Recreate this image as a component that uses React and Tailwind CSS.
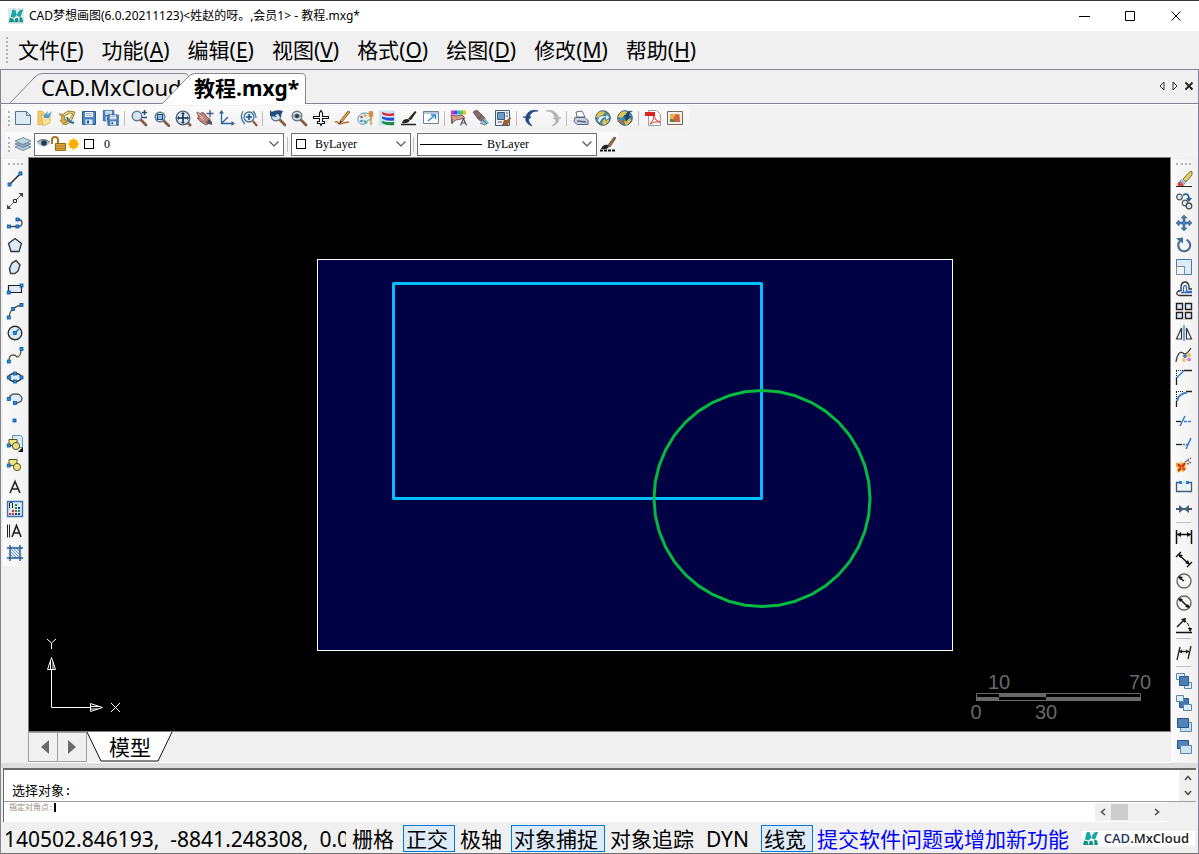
import { useState } from "react";

const Grip = ({ x, y }) => (
    <rect x={x - 1.500} y={y - 1.500} width="3" height="3" fill="#1c96f5" stroke="#0b4f96" strokeWidth=".800" />
);

const Lens = ({ x = 7, y = 7, children }) => (
    <>
        <path d={`M${x + 4} ${y + 4}l5 5`} stroke="#8a5a3a" strokeWidth="2.8" strokeLinecap="round" />
        <circle cx={x} cy={y} r="4.8" fill="#d3e4f3" stroke="#6a7c8c" strokeWidth="1.4" />
        {children}
    </>
);

const Globe = ({ children }) => (
    <>
        <circle cx="9" cy="9" r="7.3" fill="#3f86b0" stroke="#35617c" />
        <path d="M4 4q4-3 7-1l-2 3-4 3-3-1zM9 11l5-2 1 3-4 4-3-1z" fill="#e6c34a" />
        <path d="M2 10l4 1 1 4-3-1zM12 3l3 3-2 2-2-3z" fill="#66a65c" />
        {children}
    </>
);

const Floppy = ({ x, y, s = 1 }) => (
    <g transform={`translate(${x} ${y}) scale(${s})`}>
        <path d="M.5.5h13v13h-13z" fill="#4f83bd" stroke="#285a95" />
        <path d="M3 1h8v5H3z" fill="#f4f8fc" />
        <path d="M4 2.500h6M4 4.500h6" stroke="#9db4cc" />
        <path d="M3.500 8.500h7v5h-7z" fill="#dfe8f2" />
        <path d="M5 9.500h2v3H5z" fill="#285a95" />
    </g>
);

const Brush = () => (
    <>
        <path d="M1 15.500h16" stroke="#111" strokeWidth="2" strokeDasharray="3 1" />
        <path d="M2 14q2-5 7-4l1 2q-2 3-8 2z" fill="#222" />
        <path d="M9 10l6-8 2 1-6 9z" fill="#a96b3e" stroke="#333" strokeWidth=".6" />
    </>
);

const icons = {
    新建: (
        <>
            <path d="M1.500 2.500h11l4 4v9h-15z" fill="#dbeaf5" stroke="#4a7699" />
            <path d="M12.500 2.500v4h4z" fill="#fff" stroke="#4a7699" />
        </>
    ),
    打开: (
        <>
            <path d="M2 2h4l2 2v11l-6 1z" fill="#f1cf66" stroke="#d6ac45" strokeWidth=".8" />
            <path d="M5 6h9v8l-7 3z" fill="#f8e29b" stroke="#d6ac45" strokeWidth=".8" />
            <path d="M16 2l-5 4 1-4-4 4v3h5z" fill="#4f9fd0" />
        </>
    ),
    打开云图: (
        <>
            <path d="M4 6l6-4 7 1-4 10-6 3z" fill="#f3d680" stroke="#8b7330" strokeWidth=".9" />
            <path d="M6 7l6-3 3 1-4 6-3 3z" fill="#fff4c8" stroke="#7f7442" strokeWidth=".8" />
            <path d="M1 5q5-1 6 6h2.500L5.500 16 2 11h2q0-4-3-6z" fill="#e2a93c" stroke="#80622a" strokeWidth=".6" />
            <path d="M9 8q1 5 7 6" fill="none" stroke="#1f6fb4" strokeWidth="1.800" />
        </>
    ),
    保存: <Floppy x={2} y={2} />,
    另存为: (
        <>
            <Floppy x={1} y={1} s={0.8} />
            <Floppy x={5.500} y={5.500} s={0.8} />
        </>
    ),
    缩放: (
        <Lens>
            <path d="M12 3.500h5M14.500 1v5M12 8.500h5" stroke="#1d4f86" strokeWidth="1.4" />
        </Lens>
    ),
    窗口缩放: (
        <Lens x={8} y={8}>
            <path d="M5.500 5.500h5v5h-5z" fill="#9dc0e4" stroke="#1d4f86" strokeWidth="1.2" />
        </Lens>
    ),
    范围缩放: (
        <>
            <path d="M13 13l4 4" stroke="#8a5a3a" strokeWidth="2.5" />
            <circle cx="9" cy="9" r="6.800" fill="#d9e8f5" stroke="#4c5e70" strokeWidth="1.3" />
            <path d="M9 4v10M4 9h10" stroke="#16324f" strokeWidth="1.6" />
            <path d="M9 3l2 2H7zM9 15l2-2H7zM3 9l2-2v4zM15 9l-2-2v4z" fill="#16324f" />
        </>
    ),
    平移: (
        <>
            <path d="M1 3l4 2 1-2 3 2 2 3 3 2v4l-4 2-5-3-4-4 2 0z" fill="#bd8379" stroke="#7c4c48" strokeWidth=".8" />
            <path d="M2 4l5 5M4 8l4 3" stroke="#eac3b6" />
            <path d="M10 14l6 2v-3l-3-3z" fill="#4d5364" />
            <path d="M14 1v7M10.500 4.500h7" stroke="#3f5e7c" strokeWidth="1.3" />
        </>
    ),
    坐标系: (
        <>
            <path d="M3.500 3v11.500H15M4 14l6-6" fill="none" stroke="#2f6398" strokeWidth="1.3" />
            <path d="M3.500 1L6 4.500H1zM17 14.500L13.500 12v5z" fill="#2f6398" />
        </>
    ),
    实时缩放: (
        <>
            <path d="M13 12l4 5" stroke="#8a5a3a" strokeWidth="2.2" />
            <path d="M3 2q-4 7 2 13M13 2q3 3 3 7" fill="none" stroke="#4a7ba8" strokeWidth="1.3" />
            <circle cx="9" cy="8" r="5" fill="#d9e8f5" stroke="#55708a" strokeWidth="1.3" />
            <path d="M9 5v6M6 8h6" stroke="#1d4f86" strokeWidth="1.5" />
        </>
    ),
    上一视图: (
        <>
            <Lens x={8} y={7} />
            <path d="M2 7V1l2 2q6-3 11-1l-3 6-2-3-3 1 2 2z" fill="#224c7f" />
        </>
    ),
    查看: (
        <Lens>
            <circle cx="7" cy="7" r="2" fill="#333" />
            <path d="M3.500 7Q7 3 10.500 7Q7 11 3.500 7" fill="none" stroke="#555" strokeWidth=".800" />
        </Lens>
    ),
    图块: (
        <path
            d="M9 1.500L7.500 4v3.500h-6v2h6v3h-2v2h2.500l1 2 1-2h2.500v-2h-2v-3h6v-2h-6V4z"
            fill="#fff" stroke="#111" strokeWidth="1.100"
        />
    ),
    铅笔: (
        <>
            <path d="M1 13q3-1 3 1 2 2 5 0l6-1" fill="none" stroke="#b96b2a" strokeWidth="1.5" />
            <path d="M6 12l8-10 2 1-8 10z" fill="#dfa13b" stroke="#795229" strokeWidth=".8" />
            <path d="M6 12l-1 3 3-2z" fill="#222" />
        </>
    ),
    颜色: (
        <>
            <path d="M8 4c8 0 9 4 6 7q-4 0-3 3c-5 3-10 0-9-5 1-3 3-5 6-5z" fill="#e3eff8" stroke="#4e94be" />
            <circle cx="5.500" cy="8" r="1.300" fill="#d94a3a" />
            <circle cx="9" cy="6.500" r="1.300" fill="#e4a62c" />
            <circle cx="5.500" cy="12" r="1.300" fill="#3b83cc" />
            <circle cx="9" cy="12.500" r="1.300" fill="#4c9f4b" />
            <path d="M15 2v14M13.500 3v4h3V3z" stroke="#d88b3f" strokeWidth="1.400" fill="#e6a05c" />
        </>
    ),
    渐变: (
        <>
            <path d="M1 1.500h16v15H1z" fill="#c8e6ef" />
            <path d="M4 3q6 3 12 1v2.500Q8 8 4 5z" fill="#e52232" />
            <path d="M4 7.500q6 2 12 1v3q-7 1-12-2z" fill="#254be0" />
            <path d="M4 12q6 2 12 1v3q-7 1-12-2z" fill="#17883e" />
        </>
    ),
    刷子: (
        <>
            <path d="M1 15.500h15" stroke="#222" strokeWidth="1.500" />
            <path d="M2 14q1-4 5-4l3 1q-2 4-8 3zM8 10l7-8 1.500 1-5.500 8z" fill="#28221f" />
        </>
    ),
    全屏: (
        <>
            <path d="M1.500 2.500h15v12h-15z" fill="#fff" stroke="#6d8293" />
            <path d="M2 3h14v2H2z" fill="#b4c8d6" />
            <path d="M6 12l7-6M9 6h4.500v4" fill="none" stroke="#2a8bd0" strokeWidth="1.500" />
        </>
    ),
    文字颜色: (
        <>
            <path d="M1 1.500h3v4H1z" fill="#ef24c3" />
            <path d="M4 1.500h3v4H4z" fill="#4b45e9" />
            <path d="M7 1.500h3v4H7z" fill="#25b8e5" />
            <path d="M10 1.500h3v4h-3z" fill="#56cf36" />
            <path d="M13 1.500h3v4h-3z" fill="#f4ba24" />
            <path d="M1 6l5 1 6-1 3 3-4 1-5 1-4 3z" fill="#d79d90" stroke="#733f43" strokeWidth=".8" />
            <path d="M10.500 16.500l3-7 3 7M11.500 14h4M2 10v5" fill="none" stroke="#4b5060" strokeWidth="1.200" />
        </>
    ),
    特性匹配: (
        <>
            <path d="M1 3l4-2 5 5-4 4zM6 10l4-4 3 3-3 4z" fill="#8b6967" stroke="#58484c" strokeWidth=".7" />
            <path d="M9 13l4-4 4 5-3 2z" fill="#86b5d3" />
            <path d="M8 14l5 2M11 11l4 4" stroke="#45677f" />
        </>
    ),
    图纸设置: (
        <>
            <path d="M1.500 1.500h14v15h-14z" fill="#e9eff4" stroke="#445c75" />
            <path d="M3.500 3.500h7v7h-7z" fill="#6d9bc6" stroke="#35597d" />
            <path d="M12 4h2M12 7h2M4 13h4" stroke="#445c75" />
            <path d="M8 16l2-5 3 0 3-3 1 1-2 4-1 3z" fill="#9c5d2d" />
        </>
    ),
    撤销: <path d="M1 8l8 0-2.500 2c0 3 1 4 3.500 7C5 15 3 12 4 8 5 3 10 0 16 2c-5 0-8 2-8.500 6z" fill="#1f4880" stroke="#1f4880" strokeWidth=".800" />,
    重做: <path d="M17 9l-8 0 3 1.500c0 3-1 4-4 6.500 6-2 7-5 6.500-8C13 3 8 0 2 2c5 0 8 2 8.500 6z" fill="#b2b2b2" stroke="#b2b2b2" strokeWidth=".800" />,
    打印: (
        <>
            <path d="M5 8L4 3l6-1 3 6z" fill="#fff" stroke="#66718b" />
            <path d="M3 8.500h10l3 3v4H5l-3-3z" fill="#c7d0e1" stroke="#55617e" />
            <path d="M5 12l9 1" stroke="#55617e" strokeWidth="1.500" />
        </>
    ),
    网上浏览: (
        <Globe>
            <path d="M3 12q2-7 9-5V5l4 3-4 4V9q-4-1-6 5z" fill="#d7edf8" stroke="#356983" strokeWidth=".7" />
        </Globe>
    ),
    网上下载: (
        <Globe>
            <path d="M17 2q-4 1-4 5h2l-5 6-2-7h2q2-5 7-4z" fill="#19447a" />
            <path d="M3 11l6 4" stroke="#e45130" strokeWidth="1.500" />
        </Globe>
    ),
    输出PDF: (
        <>
            <path d="M4.500 1.500h8l4 4v11h-12z" fill="#fff" stroke="#9e9e9e" />
            <path d="M1 3h10v4H1z" fill="#d82520" />
            <path d="M6 15q4-4 4-8 1 5 6 6-6-1-10 2z" fill="none" stroke="#dd3a2e" />
        </>
    ),
    图片: (
        <>
            <path d="M1.500 2.500h15v13h-15z" fill="#f3efe8" stroke="#77695e" />
            <path d="M4 5h10v8H4z" fill="#e3b34c" />
            <path d="M5 13l5-8 3 1 1 7z" fill="#d8603a" />
            <path d="M4 10l2 0 4 3H4z" fill="#50844a" />
        </>
    ),
    图层: (
        <>
            <path d="M1 12l8-3.500 8 3.500-8 3.500z" fill="#b8ccdd" stroke="#57758e" strokeWidth=".8" />
            <path d="M1 9l8-3.500L17 9l-8 3.500z" fill="#8dabc4" stroke="#57758e" strokeWidth=".8" />
            <path d="M1 6l8-3.500L17 6 9 9.500z" fill="#c5d6e3" stroke="#57758e" strokeWidth=".8" />
        </>
    ),
    图层刷: <Brush />,

    直线: (
        <>
            <path d="M4 14L14 4" stroke="#222" strokeWidth="1.400" />
            <Grip x={3.500} y={14.500} />
            <Grip x={14.500} y={3.500} />
        </>
    ),
    构造线: (
        <>
            <path d="M2 16L16 2" stroke="#555" />
            <path d="M1 17v-4.500l4.500 4.500zM17 1v4.500L12.500 1z" fill="#444" />
            <path d="M7.500 7.500h3v3h-3z" fill="#fff" stroke="#333" />
        </>
    ),
    多段线: (
        <>
            <path d="M3 12.500h9M12 5.500q4 0 4 3.500t-4 3.500" fill="none" stroke="#444" strokeWidth="1.300" />
            <Grip x={3} y={12.500} />
            <Grip x={11.500} y={12.500} />
            <Grip x={11.500} y={5.500} />
        </>
    ),
    正多边形: <path d="M9 2.500l6.500 5-2.500 8H5l-2.500-8z" fill="#dbeaf7" stroke="#333" strokeWidth="1.300" />,
    多边形: <path d="M10 2.500l4 4.500-2 6-3 2.500H4.500l-1-5L6 5z" fill="#dbeaf7" stroke="#444" strokeWidth="1.500" />,
    矩形: (
        <>
            <path d="M2.500 5.500h13v7h-13z" fill="#dbeaf7" stroke="#222" strokeWidth="1.200" />
            <Grip x={2.800} y={12.500} />
            <Grip x={15.500} y={5.500} />
        </>
    ),
    圆弧: (
        <>
            <path d="M3 15Q4 5 16 3" fill="none" stroke="#5d5846" strokeWidth="1.300" />
            <Grip x={2.800} y={15.500} />
            <Grip x={7} y={7} />
            <Grip x={15.500} y={3} />
        </>
    ),
    圆: (
        <>
            <circle cx="9" cy="9" r="6.800" fill="#dbeaf7" stroke="#333" strokeWidth="1.400" />
            <path d="M9 9l4-4" stroke="#1672c4" strokeWidth="1.300" />
            <Grip x={8.800} y={9} />
        </>
    ),
    样条曲线: (
        <>
            <path d="M3 15q0-6 4-6 3 0 4 2 4 0 4-8" fill="none" stroke="#5d5846" strokeWidth="1.300" />
            <Grip x={2.800} y={15.500} />
            <Grip x={15.500} y={3} />
        </>
    ),
    椭圆: (
        <>
            <ellipse cx="9" cy="9.500" rx="6.500" ry="4" fill="#dbeaf7" stroke="#333" strokeWidth="1.300" />
            <Grip x={2.800} y={9.500} />
            <Grip x={15.500} y={9.500} />
            <Grip x={9} y={5.500} />
            <Grip x={9} y={13.500} />
        </>
    ),
    椭圆弧: (
        <>
            <path d="M3 9c1-7 13-6 13-.500 0 3-3 4.500-7 4.500" fill="#dbeaf7" stroke="#5b5b5b" strokeWidth="1.400" />
            <Grip x={2.800} y={9} />
            <Grip x={9} y={13} />
        </>
    ),
    点: <Grip x={8.500} y={8.500} />,
    插入块: (
        <>
            <path d="M6.500 1.500h8l2 2v10h-10z" fill="#dcebf8" stroke="#5b8fc2" />
            <path d="M3 5.500h8v6H3z" fill="#f0e884" stroke="#56561a" />
            <circle cx="10" cy="12" r="3.600" fill="#e9df85" stroke="#56561a" />
            <Grip x={2.800} y={11.500} />
            <path d="M17 13v5h-5z" fill="#111" />
        </>
    ),
    创建块: (
        <>
            <path d="M3 3.500h8v6H3z" fill="#f0e884" stroke="#56561a" />
            <circle cx="11" cy="11" r="3.600" fill="#e9df85" stroke="#56561a" />
            <Grip x={2.800} y={9.500} />
        </>
    ),
    单行文字: <path d="M4 15L9 3.500 14 15M5.500 11h7" fill="none" stroke="#222" strokeWidth="1.600" />,
    图案填充: (
        <>
            <path d="M1.500 1.500h15v15h-15z" fill="#dce9f7" stroke="#3c76b8" strokeWidth="1.400" />
            <path d="M3 13h2v2H3zM6 13h2v2H6zM6 10h2v2H6z" fill="#e6232a" />
            <path d="M9 7h2v2H9zM9 10h2v2H9zM12 10h2v2h-2zM9 4h2v2H9z" fill="#2c8a36" />
            <path d="M9 13h2v2H9zM12 13h2v2h-2zM12 7h2v2h-2z" fill="#203d94" />
            <path d="M3.500 8V3q1.500-2 3 0v5" fill="none" stroke="#222" />
        </>
    ),
    多行文字: (
        <>
            <path d="M1.500 2.500v13M3.500 2.500v13" stroke="#222" />
            <path d="M6 15L10.500 3.500 15 15M7.500 11h6" fill="none" stroke="#222" strokeWidth="1.600" />
        </>
    ),
    面域: (
        <>
            <path d="M4 4h10v10H4z" fill="#e2eef9" />
            <path d="M4 7l7 7M4 4l10 10M7 4l7 7M10 4l4 4M4 10l4 4" stroke="#4e7eb2" strokeWidth=".8" />
            <path d="M4 1v16M14 1v16M1 4h16M1 14h16" stroke="#245b98" strokeWidth="1.400" />
        </>
    ),

    删除: (
        <>
            <path d="M1 16.500h16" stroke="#222" />
            <path d="M8 9l7-7.500h2V5l-6 7z" fill="#e4cf60" stroke="#5d512a" strokeWidth=".8" />
            <path d="M6.500 9.500l4 3.500-1.500 1.500-4-3.500z" fill="#a5c5e0" stroke="#44617c" strokeWidth=".500" />
            <path d="M4.500 11.500L8.500 15l-1 1H4l-1.500-2z" fill="#e2463c" stroke="#7a2620" strokeWidth=".500" />
        </>
    ),
    复制: (
        <>
            <circle cx="4.500" cy="5" r="2.800" fill="#dce8f2" stroke="#555" strokeWidth="1.200" />
            <circle cx="10" cy="11" r="2.800" fill="#dce8f2" stroke="#555" strokeWidth="1.200" />
            <circle cx="14" cy="14" r="2.800" fill="#dce8f2" stroke="#444" strokeWidth="1.200" />
            <path d="M8 3q6-3 6 4" fill="none" stroke="#245b98" strokeWidth="1.800" />
            <path d="M11 6h6l-3 4z" fill="#245b98" />
        </>
    ),
    移动: (
        <path d="M9 1l3 3h-2v4h4V6l3 3-3 3v-2h-4v4h2l-3 3-3-3h2v-4H4v2L1 9l3-3v2h4V4H6z" fill="#4b7eae" stroke="#2d6094" strokeWidth=".600" />
    ),
    旋转: (
        <>
            <path d="M11.500 3.700A6 6 0 1 1 5 5" fill="none" stroke="#4d7298" strokeWidth="2.200" />
            <path d="M1 2.500l7-1v6z" fill="#3c6d9d" />
        </>
    ),
    比例: (
        <>
            <path d="M1.500 1.500h15v15h-15z" fill="#dcebf8" />
            <path d="M1.500 8V1.500h15v15H10" fill="none" stroke="#427bb0" />
            <path d="M1.500 8.500h8v8h-8z" fill="#eef5fb" stroke="#222" strokeDasharray="1 1" />
        </>
    ),
    偏移: (
        <>
            <path d="M17 15.500H4q-3-1-2-3t4-2V6q1-4 4-4t4 4v3h3" fill="none" stroke="#333" strokeWidth="1.300" />
            <path d="M17 12.500H6M8.500 12V7q2-3 3 0v4.500H17" fill="none" stroke="#2b72c4" strokeWidth="1.300" />
        </>
    ),
    阵列: (
        <path d="M1.500 1.500h6v6h-6zM10.500 1.500h6v6h-6zM1.500 10.500h6v6h-6zM10.500 10.500h6v6h-6z" fill="#dcebf8" stroke="#222" strokeWidth="1.400" />
    ),
    镜像: (
        <>
            <path d="M6.500 4v11H1.500zM11.500 4v11h5z" fill="#fff" stroke="#333" strokeWidth="1.200" />
            <path d="M9 1v16" stroke="#2c7ccb" strokeWidth="1.300" />
        </>
    ),
    编辑曲线: (
        <>
            <path d="M1 16Q3 4 8 7q3 3 8-5" fill="none" stroke="#444" strokeWidth="1.300" />
            <circle cx="10" cy="10" r="2" fill="#3f79bd" />
            <circle cx="14" cy="9" r="2" fill="#eabf4a" />
            <circle cx="9" cy="14" r="2" fill="#e6c95a" />
            <circle cx="14" cy="13.500" r="2" fill="#d57fd0" />
        </>
    ),
    倒角: (
        <>
            <path d="M1 2.500h8M1.500 3v7" stroke="#222" strokeDasharray="1 1" />
            <path d="M1.500 9v8M9 2.500h8" stroke="#222" strokeWidth="1.300" />
            <path d="M1.500 10L9 2.500" stroke="#2b7fd0" strokeWidth="1.500" />
        </>
    ),
    圆角: (
        <>
            <path d="M1 1.500h8M1.500 2v8" stroke="#222" strokeDasharray="1 1" />
            <path d="M1.500 11v6M11 1.500h6" stroke="#222" strokeWidth="1.300" />
            <path d="M2 11Q3 4 12 2.500" fill="none" stroke="#3984cd" strokeWidth="2" />
        </>
    ),
    修剪: (
        <>
            <path d="M1 9.500h5" stroke="#222" strokeWidth="1.300" />
            <path d="M9 9.500h8" stroke="#2b7fd0" strokeWidth="1.300" strokeDasharray="3 1" />
            <path d="M5 14l5-10" stroke="#2b7fd0" strokeWidth="1.500" />
        </>
    ),
    延伸: (
        <>
            <path d="M1 10.500h6" stroke="#222" strokeWidth="1.300" />
            <path d="M8 10.500h5" stroke="#2b7fd0" strokeWidth="1.300" strokeDasharray="2 1" />
            <path d="M11 15l5-11" stroke="#2b7fd0" strokeWidth="1.500" />
        </>
    ),
    分解: (
        <>
            <path d="M1 6l4 2 1-3 2 3 3-1-1 3 2 2-3 1 0 3-3-1-4 2 1-4-2-2z" fill="#f3b531" />
            <path d="M3 8l3 3M7 11l3-4M3 15l3-3M8 12l2 2" stroke="#d92b1c" strokeWidth="2.200" />
            <path d="M10 6l6-4M12 4l4 3M12 8l3-1" stroke="#777" strokeDasharray="2 1" strokeWidth="1.600" />
        </>
    ),
    打断: (
        <>
            <path d="M5 4.500H1.500v9h15v-9H13" fill="#edf4fa" stroke="#485e72" strokeWidth="1.300" />
            <path d="M4 3h3v3H4zM11 3h3v3h-3z" fill="#2480db" />
        </>
    ),
    合并: (
        <>
            <path d="M1 9h16" stroke="#111" strokeWidth="1.400" />
            <path d="M4 5l5 4-5 4zM14 5L9 9l5 4z" fill="#3b6284" />
        </>
    ),
    线性标注: (
        <>
            <path d="M1.500 2v14M16.500 2v14M2 6.500h14" stroke="#111" strokeWidth="1.500" />
            <path d="M2 6.500l4-2.500v5zM16 6.500L12 4v5z" fill="#111" />
        </>
    ),
    对齐标注: (
        <>
            <path d="M3 4l12 11M1 7l5-5M12 17l5-5" stroke="#111" strokeWidth="1.400" />
            <path d="M3 4l5 1-3 3zM15 15l-5-2 3-3z" fill="#111" />
        </>
    ),
    半径标注: (
        <>
            <circle cx="9" cy="9" r="7" fill="#f5f5f5" stroke="#666" strokeWidth="1.400" />
            <path d="M9 9L5 6" stroke="#111" strokeWidth="1.500" />
            <path d="M3 4l5 1-3 3z" fill="#111" />
        </>
    ),
    直径标注: (
        <>
            <circle cx="9" cy="9" r="7" fill="#f5f5f5" stroke="#666" strokeWidth="1.400" />
            <path d="M13 13L5 5" stroke="#111" strokeWidth="1.500" />
            <path d="M3 4l5 1-3 3zM15 14l-5-1 3-3z" fill="#111" />
        </>
    ),
    角度标注: (
        <>
            <path d="M1 16.500h16M2 11l8-8" stroke="#111" strokeWidth="1.400" />
            <path d="M8 4q6 2 7 11" fill="none" stroke="#111" strokeDasharray="4 1" />
            <path d="M6 3l5-1-1 5zM13 12h4l-1.500 4z" fill="#111" />
        </>
    ),
    编辑标注: (
        <>
            <path d="M2 16L5 3M13 15L16 2M4 7.500h10" stroke="#222" strokeWidth="1.300" />
            <path d="M4 7.500L7 5.500v4zM14 7.500L11 5.500v4z" fill="#222" />
        </>
    ),
    前置: (
        <>
            <path d="M1.500 1.500h8v6h-8zM9.500 10.500h7v6h-7z" fill="#dcecf6" stroke="#5d89af" />
            <path d="M4.500 4.500h9v9h-9z" fill="#4f7fb2" stroke="#2b5c91" />
        </>
    ),
    后置: (
        <>
            <path d="M4.500 4.500h9v9h-9z" fill="#4478ac" stroke="#2b5c91" />
            <path d="M1.500 1.500h7v6h-7zM8.500 10.500h8v6h-8z" fill="#dcecf6" stroke="#5d89af" />
        </>
    ),
    置于对象之上: (
        <>
            <path d="M5.500 6.500h11v9h-11z" fill="#c1e0ec" stroke="#5d89af" />
            <path d="M2.500 2.500h11v9h-11z" fill="#5484b7" stroke="#23538a" />
        </>
    ),
    置于对象之下: (
        <>
            <path d="M2.500 2.500h11v8h-11z" fill="#5484b7" stroke="#23538a" />
            <path d="M5.500 7.500h11v8h-11z" fill="#cfe3ee" stroke="#5d89af" />
        </>
    ),
};

const topTools = [
    ["新建", "打开", "打开云图", "保存", "另存为"],
    ["缩放", "窗口缩放", "范围缩放", "平移", "坐标系", "实时缩放"],
    ["上一视图", "查看", "图块", "铅笔", "颜色", "渐变", "刷子", "全屏"],
    ["文字颜色", "特性匹配", "图纸设置"],
    ["撤销", "重做"],
    ["打印", "网上浏览", "网上下载"],
    ["输出PDF", "图片"],
];

const drawTools = [
    "直线", "构造线", "多段线", "正多边形", "多边形", "矩形", "圆弧", "圆", "样条曲线",
    "椭圆", "椭圆弧", "点", "插入块", "创建块", "单行文字", "图案填充", "多行文字", "面域",
];

const modifyTools = [
    ["删除", "复制", "移动", "旋转", "比例", "偏移", "阵列", "镜像", "编辑曲线", "倒角", "圆角", "修剪", "延伸", "分解", "打断", "合并"],
    ["线性标注", "对齐标注", "半径标注", "直径标注", "角度标注"],
    ["编辑标注"],
    ["前置", "后置", "置于对象之上", "置于对象之下"],
];

const menus = [
    ["文件", "F"], ["功能", "A"], ["编辑", "E"], ["视图", "V"],
    ["格式", "O"], ["绘图", "D"], ["修改", "M"], ["帮助", "H"],
];

const Tool = ({ name }) => (
    <button type="button" aria-label={name} className="flex h-[22px] w-[22px] shrink-0 items-center justify-center hover:bg-sky-100">
        <svg viewBox="0 0 18 18" className="h-[18px] w-[18px]" fill="none">{icons[name]}</svg>
    </button>
);

const Handle = ({ vertical }) => (
    <div className={vertical
        ? "my-[3px] w-[15px] shrink-0 border-t-2 border-dotted border-[#b4b4b4]"
        : "mr-[2px] ml-[3px] h-[15px] shrink-0 border-l-2 border-dotted border-[#b4b4b4]"}
    />
);

const Chevron = () => (
    <svg viewBox="0 0 10 6" className="pointer-events-none mr-1 h-[6px] w-[10px] shrink-0" fill="none">
        <path d="M.500.500L5 5 9.500.500" stroke="#555" strokeWidth="1.200" />
    </svg>
);

const Combo = ({ label, value, className, children }) => (
    <label className={`flex h-[23px] shrink-0 items-center border border-[#707070] bg-white ${className}`}>
        {children}
        <select
            aria-label={label}
            className="h-full min-w-0 flex-1 appearance-none bg-transparent font-['Liberation_Serif','Noto_Sans_CJK_SC',serif] text-[12px] leading-5 text-black outline-none"
        >
            <option>{value}</option>
        </select>
        <Chevron />
    </label>
);

const Swatch = () => <span className="h-[10px] w-[10px] shrink-0 border border-black bg-white" />;

const MxLogo = ({ className }) => (
    <svg viewBox="0 0 18 16" className={className}>
        <path d="M5 1h3l2 6-3 3-4-1zM11 4l3-3h3l-3 8-4-1z" fill="#19a7a0" />
        <path d="M2 10l4 1 1 4H1zM8 11l3-1 1 5H7zM13 9l3 1 1 5h-4z" fill="#138f8b" />
    </svg>
);

const circlePoints = Array.from({ length: 40 }, (_, i) => {
    const a = (i * Math.PI) / 20;
    return `${(733 + 108 * Math.cos(a)).toFixed(1)},${(340.500 + 108 * Math.sin(a)).toFixed(1)}`;
}).join(" ");

const Drawing = () => (
    <svg viewBox="0 0 1141 573" className="block h-full w-full" fill="none">
        <rect x="288.500" y="101.500" width="635" height="391" fill="#000044" stroke="#fff" />
        <rect x="364.500" y="125.500" width="368" height="215" stroke="#00bfff" strokeWidth="3" strokeLinejoin="round" />
        <polygon points={circlePoints} stroke="#00bb3f" strokeWidth="3" strokeLinejoin="round" />

        <g stroke="#fff" strokeWidth="1">
            <path d="M22.500 511V549.500H61" />
            <path d="M18.500 511.500h8l-4-12zM21.500 511v-8M24 511v-7" />
            <path d="M61.500 545.500v8l12-4zM62 548.500h8M62 551h7" />
            <path d="M18 481l4.500 4 4.500-4M22.500 485v6" />
            <path d="M82 545l9 9M91 545l-9 9" />
        </g>

        <path d="M947.500 535.500h164v7h-164z" stroke="#686868" />
        <path d="M947 539h23v4h-23zM970 535h47v4h-47zM1017 539h95v4h-95z" fill="#686868" />
        <g fill="#686868" fontSize="20" fontFamily="Liberation Sans, sans-serif" textAnchor="middle">
            <text x="970" y="531">10</text>
            <text x="1111" y="531">70</text>
            <text x="947" y="561">0</text>
            <text x="1017" y="561">30</text>
        </g>
    </svg>
);

const StatusButton = ({ children, className, on, onClick }) => (
    <button
        type="button"
        aria-pressed={on}
        onClick={onClick}
        className={`flex h-[27px] shrink-0 items-center border px-[2px] whitespace-nowrap ${on ? "border-[#0078d7] bg-[#dcebf7]" : "border-transparent"} ${className}`}
    >
        {children}
    </button>
);

export default function App() {
    const [modes, setModes] = useState({ 正交: true, 对象捕捉: true, 线宽: true });
    const toggle = (name) => setModes({ ...modes, [name]: !modes[name] });

    return (
        <div className="flex h-screen min-h-[640px] flex-col overflow-hidden border-t border-[#3c3835] bg-[#f0f0f0] font-['Noto_Sans','Noto_Sans_CJK_SC',sans-serif] text-[21px] leading-7 text-black">
            <header className="flex h-[30px] shrink-0 items-center bg-white pl-2">
                <MxLogo className="h-[16px] w-[16px] bg-[#dfe9e9]" />
                <h1 className="ml-[5px] text-[12px] leading-4 whitespace-pre">CAD梦想画图(6.0.20211123)&lt;姓赵的呀。,会员1&gt; - 教程.mxg*</h1>
                <div className="ml-auto flex h-full">
                    <button type="button" aria-label="最小化" className="flex w-[46px] items-center justify-center">
                        <svg viewBox="0 0 11 11" className="h-[11px] w-[11px]"><path d="M0 5.500h11" stroke="#000" /></svg>
                    </button>
                    <button type="button" aria-label="最大化" className="flex w-[46px] items-center justify-center">
                        <svg viewBox="0 0 11 11" className="h-[11px] w-[11px]"><path d="M.500.500h9v9H.500z" fill="none" stroke="#000" /></svg>
                    </button>
                    <button type="button" aria-label="关闭" className="flex w-[46px] items-center justify-center">
                        <svg viewBox="0 0 11 11" className="h-[11px] w-[11px]"><path d="M.500.500l9 9M9.500.500l-9 9" stroke="#000" /></svg>
                    </button>
                </div>
            </header>

            <nav className="flex h-[38px] shrink-0 items-center gap-[18px] pl-[6px]">
                <div className="-mr-2 h-[26px] border-l-2 border-dotted border-[#b4b4b4]" />
                {menus.map(([name, key]) => (
                    <button key={key} type="button" className="whitespace-nowrap">
                        {name}(<span className="underline underline-offset-2">{key}</span>)
                    </button>
                ))}
            </nav>

            <div className="flex min-h-0 flex-1 flex-col border-x border-t border-[#85858f]">
                <div className="flex h-[34px] shrink-0 items-end border-b border-[#85858f] pl-[8px]">
                    <button type="button" className="relative h-[30px] w-[182px] shrink-0 pb-[2px] text-left">
                        <svg viewBox="0 0 182 30" className="absolute inset-0 h-full w-full" fill="none">
                            <path d="M1 30L26 4q3-3.500 7-3.500H176q3 0 3.500 3V30" stroke="#85858f" />
                        </svg>
                        <span className="relative pl-[32px] text-[22px]">CAD.MxCloud</span>
                    </button>
                    <button type="button" className="relative -mb-px -ml-[30px] h-[31px] w-[145px] shrink-0 pb-[2px] text-left">
                        <svg viewBox="0 0 145 31" className="absolute inset-0 h-full w-full">
                            <path d="M1 31L26 5q4-4.500 8-4.500h107q3 0 3.500 3V31" fill="#fff" stroke="#85858f" />
                        </svg>
                        <span className="relative pl-[33px] font-bold">教程.mxg*</span>
                    </button>
                    <div className="mr-1 mb-[12px] ml-auto flex items-center gap-[5px]">
                        <button type="button" aria-label="上一个" className="block">
                            <svg viewBox="0 0 8 10" className="h-[10px] w-[8px]"><path d="M6 1v8L2 5z" fill="none" stroke="#333" /></svg>
                        </button>
                        <button type="button" aria-label="下一个" className="block">
                            <svg viewBox="0 0 8 10" className="h-[10px] w-[8px]"><path d="M2 1v8l4-4z" fill="none" stroke="#333" /></svg>
                        </button>
                        <button type="button" aria-label="关闭图纸" className="block">
                            <svg viewBox="0 0 10 10" className="h-[10px] w-[10px]"><path d="M1.500 1.500l7 7M8.500 1.500l-7 7" stroke="#222" strokeWidth="1.800" /></svg>
                        </button>
                    </div>
                </div>

                <div className="flex shrink-0 flex-col items-start gap-[2px] border-t border-white bg-[#f3f3f3] py-px pl-1">
                    <div className="flex h-6 items-center rounded-r bg-linear-to-b from-[#fbfbfb] to-[#f1f1f1] pr-[3px]">
                        <Handle />
                        {topTools.map((group, i) => (
                            <div key={i} className="flex items-center">
                                {i > 0 && <div className="mr-[3px] ml-[2px] h-[15px] w-px bg-[#bdbdbd]" />}
                                {group.map((name) => <Tool key={name} name={name} />)}
                            </div>
                        ))}
                    </div>
                    <div className="flex h-6 items-center rounded-r bg-linear-to-b from-[#fbfbfb] to-[#f1f1f1]">
                        <Handle />
                        <Tool name="图层" />
                        <Combo label="图层" value="0" className="w-[250px] gap-[3px] pl-[2px]">
                            <svg viewBox="0 0 44 16" className="h-[16px] w-[44px] shrink-0" fill="none">
                                <path d="M0 7q6-7 13 0-6 7-13 0z" fill="#a9bdcd" />
                                <path d="M0 6q6-5 13 0" stroke="#52657a" />
                                <circle cx="7" cy="7" r="2.800" fill="#24384e" />
                                <path d="M15 8V4q0-3 3-3t3 3v3" stroke="#a5791f" strokeWidth="2" />
                                <path d="M18.500 7.500h10v7h-10z" fill="#e2a93a" stroke="#8d681e" />
                                <path d="M19 10h9M19 12.500h9" stroke="#a97b26" />
                                <path d="M36.500 2v12M30.500 8h12M32.500 4l8 8M40.500 4l-8 8" stroke="#ffc400" strokeWidth="1.600" />
                                <circle cx="36.500" cy="8" r="4.500" fill="#ffae00" />
                            </svg>
                            <Swatch />
                            <span className="w-[4px]" />
                        </Combo>
                        <div className="mx-[3px] h-[15px] w-px bg-[#bdbdbd]" />
                        <Combo label="颜色" value="ByLayer" className="w-[120px] gap-[9px] pl-1">
                            <Swatch />
                        </Combo>
                        <div className="mr-[3px] ml-[2px] h-[15px] w-px bg-[#bdbdbd]" />
                        <Combo label="线型" value="ByLayer" className="w-[180px] gap-[5px] pl-[2px]">
                            <span className="h-px w-[62px] shrink-0 bg-black" />
                        </Combo>
                        <Tool name="图层刷" />
                    </div>
                </div>

                <main className="flex min-h-0 flex-1">
                    <aside className="w-[27px] shrink-0 pt-[2px] pr-px pl-[2px]">
                        <div className="flex flex-col items-center bg-linear-to-r from-[#fbfbfb] to-[#f1f1f1] pt-px pb-[2px]">
                            <Handle vertical />
                            {drawTools.map((name) => <Tool key={name} name={name} />)}
                        </div>
                    </aside>
                    <section className="flex min-w-0 flex-1 flex-col">
                        <div className="min-h-0 flex-1 border border-[#808080] bg-black">
                            <Drawing />
                        </div>
                        <div className="flex h-[31px] shrink-0 border-b border-white">
                            <button type="button" aria-label="上一布局" className="flex w-[30px] items-center justify-center border border-[#a0a0a0] pl-1">
                                <svg viewBox="0 0 8 14" className="h-[14px] w-[8px]"><path d="M8 0v14L0 7z" fill="#6b6b6b" /></svg>
                            </button>
                            <button type="button" aria-label="下一布局" className="flex w-[29px] items-center justify-center border-y border-r border-[#a0a0a0]">
                                <svg viewBox="0 0 8 14" className="h-[14px] w-[8px]"><path d="M0 0v14l8-7z" fill="#6b6b6b" /></svg>
                            </button>
                            <button type="button" className="relative w-[86px]">
                                <svg viewBox="0 0 86 30" className="absolute inset-0 h-full w-full">
                                    <path d="M0 0l14 29h57L85 0" fill="#fff" stroke="#111" />
                                </svg>
                                <span className="relative">模型</span>
                            </button>
                        </div>
                    </section>
                    <aside className="w-[27px] shrink-0 pt-[2px] pr-[2px]">
                        <div className="flex flex-col items-center bg-linear-to-r from-[#fbfbfb] to-[#f1f1f1] pt-px pb-1">
                            <Handle vertical />
                            {modifyTools.map((group, i) => (
                                <div key={i} className="flex flex-col items-center">
                                    {i > 0 && <div className="mt-[2px] mb-[3px] h-px w-[15px] bg-[#bdbdbd]" />}
                                    {group.map((name) => <Tool key={name} name={name} />)}
                                </div>
                            ))}
                        </div>
                    </aside>
                </main>

                <div className="h-[5px] shrink-0 bg-[#dedede]" />

                <section className="mx-[2px] shrink-0 border-t-2 border-l border-[#696969] bg-white font-['Liberation_Mono','Noto_Sans_CJK_SC',monospace]">
                    <div className="flex h-[32px] border-b border-[#a0a0a0]">
                        <p className="flex-1 self-end pl-2 text-[13px] leading-[18px]">选择对象:</p>
                        <div className="flex w-[17px] flex-col items-center justify-between bg-[#f0f0f0] py-[5px]">
                            <button type="button" aria-label="向上滚动">
                                <svg viewBox="0 0 8 6" className="block h-[6px] w-[8px]"><path d="M1 5l3-3.500L7 5" fill="none" stroke="#505050" strokeWidth="1.600" /></svg>
                            </button>
                            <button type="button" aria-label="向下滚动">
                                <svg viewBox="0 0 8 6" className="block h-[6px] w-[8px]"><path d="M1 1l3 3.500L7 1" fill="none" stroke="#505050" strokeWidth="1.600" /></svg>
                            </button>
                        </div>
                    </div>
                    <div className="flex h-[20px] items-start">
                        <label htmlFor="command" className="pl-[5px] text-[8px] leading-[12px] text-[#9a8a80]">指定对角点:</label>
                        <span className="mt-px h-[9px] w-[2px] bg-black" />
                        <input id="command" className="h-[18px] min-w-0 flex-1 bg-transparent text-[8px] outline-none" />
                        <div className="mt-px flex h-[18px] w-[72px] items-center bg-[#f0f0f0]">
                            <button type="button" aria-label="向左滚动" className="flex w-[16px] justify-center">
                                <svg viewBox="0 0 6 8" className="h-[8px] w-[6px]"><path d="M5 1L1.500 4 5 7" fill="none" stroke="#505050" strokeWidth="1.600" /></svg>
                            </button>
                            <span className="h-[16px] w-[17px] bg-[#cdcdcd]" />
                            <button type="button" aria-label="向右滚动" className="mr-[2px] ml-auto flex w-[17px] justify-center">
                                <svg viewBox="0 0 6 8" className="h-[8px] w-[6px]"><path d="M1 1l3.500 3L1 7" fill="none" stroke="#505050" strokeWidth="1.600" /></svg>
                            </button>
                        </div>
                        <div className="h-full w-[29px] bg-[#f0f0f0]" />
                    </div>
                </section>

                <footer className="flex h-[32px] shrink-0 items-center border-b border-[#6f6f74] pt-[2px] pl-[3px]">
                    <output className="min-w-0 flex-[0_1_342px] overflow-hidden whitespace-pre">140502.846193,  -8841.248308,  0.00</output>
                    <StatusButton className="ml-[3px] w-[51px]" on={!!modes.栅格} onClick={() => toggle("栅格")}>栅格</StatusButton>
                    <StatusButton className="ml-[3px] w-[52px]" on={modes.正交} onClick={() => toggle("正交")}>正交</StatusButton>
                    <StatusButton className="ml-[2px] w-[51px]" on={!!modes.极轴} onClick={() => toggle("极轴")}>极轴</StatusButton>
                    <StatusButton className="ml-[3px] w-[94px]" on={modes.对象捕捉} onClick={() => toggle("对象捕捉")}>对象捕捉</StatusButton>
                    <StatusButton className="ml-[2px] w-[94px]" on={!!modes.对象追踪} onClick={() => toggle("对象追踪")}>对象追踪</StatusButton>
                    <StatusButton className="ml-[2px] w-[55px]" on={!!modes.DYN} onClick={() => toggle("DYN")}>DYN</StatusButton>
                    <StatusButton className="ml-[3px] w-[52px]" on={modes.线宽} onClick={() => toggle("线宽")}>线宽</StatusButton>
                    <a href="#feedback" className="ml-[4px] shrink-0 whitespace-nowrap text-[#0000ff]">提交软件问题或增加新功能</a>
                    <div className="mr-[3px] ml-auto flex h-[15px] shrink-0 items-center bg-white pr-[6px] font-['Open_Sans','Noto_Sans',sans-serif] text-[13px] leading-[15px] font-semibold text-[#222]">
                        <MxLogo className="mr-[5px] h-[15px] w-[17px]" />
                        <span className="text-[#2c3560]">CAD</span>.MxCloud
                    </div>
                </footer>
            </div>
        </div>
    );
}
